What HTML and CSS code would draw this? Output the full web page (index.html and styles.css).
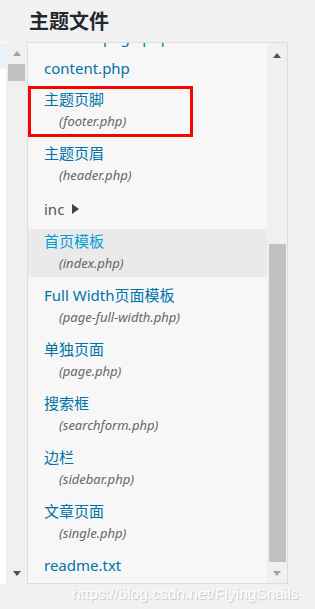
FILE: index.html
```html
<!DOCTYPE html>
<html lang="zh-CN">
<head>
    <meta charset="UTF-8">
    <meta name="viewport" content="width=device-width, initial-scale=1.0">
    <title>主题文件</title>
    <link rel="stylesheet" href="styles.css">
</head>
<body>
    <h2 class="files-title">主题文件</h2>

    <div class="editor-row">
        <!-- cut-off code editor on the left -->
        <div class="code-panel">
            <div class="code-lines">
                <div class="active-line"></div>
            </div>
            <div class="scrollbar scrollbar-left">
                <div class="sb-btn sb-up-left"><span class="arrow-up light"></span></div>
                <div class="sb-track">
                    <div class="sb-thumb thumb-left"></div>
                </div>
                <div class="sb-btn sb-down-left"><span class="arrow-down dark"></span></div>
            </div>
        </div>

        <!-- theme file list -->
        <div class="file-panel">
            <div class="file-view">
                <ul class="file-list">
                    <li><a href="#">content-page.php</a></li>
                    <li><a href="#">content.php</a></li>
                    <li class="marked">
                        <a href="#">主题页脚<span class="file-name">(footer.php)</span></a>
                        <span class="red-box"></span>
                    </li>
                    <li><a href="#">主题页眉<span class="file-name">(header.php)</span></a></li>
                    <li class="folder"><span class="folder-name">inc</span><span class="folder-arrow"></span></li>
                    <li class="current"><a href="#">首页模板<span class="file-name">(index.php)</span></a></li>
                    <li><a href="#">Full Width页面模板<span class="file-name">(page-full-width.php)</span></a></li>
                    <li><a href="#">单独页面<span class="file-name">(page.php)</span></a></li>
                    <li><a href="#">搜索框<span class="file-name">(searchform.php)</span></a></li>
                    <li><a href="#">边栏<span class="file-name">(sidebar.php)</span></a></li>
                    <li><a href="#">文章页面<span class="file-name">(single.php)</span></a></li>
                    <li><a href="#">readme.txt</a></li>
                </ul>
            </div>
            <div class="scrollbar scrollbar-right">
                <div class="sb-btn sb-up-right"><span class="arrow-up dark"></span></div>
                <div class="sb-track">
                    <div class="sb-thumb thumb-right"></div>
                </div>
                <div class="sb-btn sb-down-right"><span class="arrow-down light"></span></div>
            </div>
        </div>
    </div>

    <div class="watermark">https://blog.csdn.net/FlyingSnails</div>
</body>
</html>
```

FILE: styles.css
```css
body {
  margin: 0;
  background: #f1f1f1;
  font-family: "Noto Sans", "Noto Sans CJK SC", sans-serif;
  color: #444;
}

.files-title {
  margin: 0;
  padding: 9px 0 0 29px;
  height: 33px;
  font-size: 20px;
  line-height: 26px;
  font-weight: bold;
  color: #23282d;
}

.editor-row {
  display: flex;
  height: 542px;
}

/* Left: cut-off code editor */
.code-panel {
  display: flex;
  width: 27px;
  border-right: 1px solid #ddd;
}

.code-lines {
  width: 6px;
  background: #fff;
  padding-top: 1px;
}

.active-line {
  height: 26px;
  background: #e8f1fc;
}

/* Scrollbars */
.scrollbar {
  display: flex;
  flex-direction: column;
  background: #f0f0f0;
}

.scrollbar-left {
  width: 21px;
}

.scrollbar-right {
  width: 20px;
}

.sb-btn {
  display: flex;
  align-items: center;
  justify-content: center;
}

.sb-up-left {
  height: 22px;
}

.sb-down-left {
  height: 22px;
}

.sb-up-right {
  height: 24px;
}

.sb-down-right {
  height: 20px;
}

.sb-track {
  flex: 1;
}

.sb-thumb {
  background: #c1c1c1;
}

.thumb-left {
  margin: 0 2px 0 2px;
  height: 17px;
}

.thumb-right {
  margin: 177px 1px 0 2px;
  height: 318px;
}

.arrow-up,
.arrow-down {
  width: 0;
  height: 0;
  border-left: 4.5px solid transparent;
  border-right: 4.5px solid transparent;
}

.arrow-up.dark {
  border-bottom: 5px solid #505050;
}

.arrow-up.light {
  border-bottom: 5px solid #a3a3a3;
}

.arrow-down.dark {
  border-top: 5px solid #505050;
}

.arrow-down.light {
  border-top: 5px solid #a3a3a3;
}

/* Right: file list */
.file-panel {
  display: flex;
  width: 259px;
  border-top: 1px solid #ddd;
  border-right: 1px solid #ddd;
  border-bottom: 1px solid #ddd;
}

.file-view {
  flex: 1;
  overflow: hidden;
  background: #f7f7f7;
}

.file-list {
  list-style: none;
  margin: -18px 0 0 0;
  padding: 0;
  display: flex;
  flex-direction: column;
  gap: 6px;
}

.file-list li {
  position: relative;
  padding: 2px 0 2px 16px;
}

.file-list a {
  display: block;
  color: #0073aa;
  text-decoration: none;
  font-size: 15px;
  line-height: 21px;
}

.file-name {
  display: block;
  padding-left: 15px;
  color: #666;
  font-size: 13px;
  font-style: italic;
  line-height: 23px;
}

.file-list li.current {
  background: #eaeaea;
}

.file-list li.current a {
  color: #00a0d2;
}

.file-list li.folder {
  padding-top: 4px;
  padding-bottom: 3px;
  font-size: 15px;
  line-height: 21px;
  color: #555;
}

.folder-arrow {
  display: inline-block;
  margin-left: 8px;
  width: 0;
  height: 0;
  border-top: 5px solid transparent;
  border-bottom: 5px solid transparent;
  border-left: 7px solid #444;
  vertical-align: 1px;
}

/* annotation box drawn over the footer entry */
.red-box {
  position: absolute;
  left: 0;
  top: -1px;
  width: 159px;
  height: 45px;
  border: 3px solid #f00;
}

.watermark {
  padding: 1px 0 0 72px;
  font-family: "Liberation Sans", sans-serif;
  font-size: 15.5px;
  line-height: 18px;
  color: #fff;
  text-shadow: 1px 1px 1px #c4c4c4;
}
```
